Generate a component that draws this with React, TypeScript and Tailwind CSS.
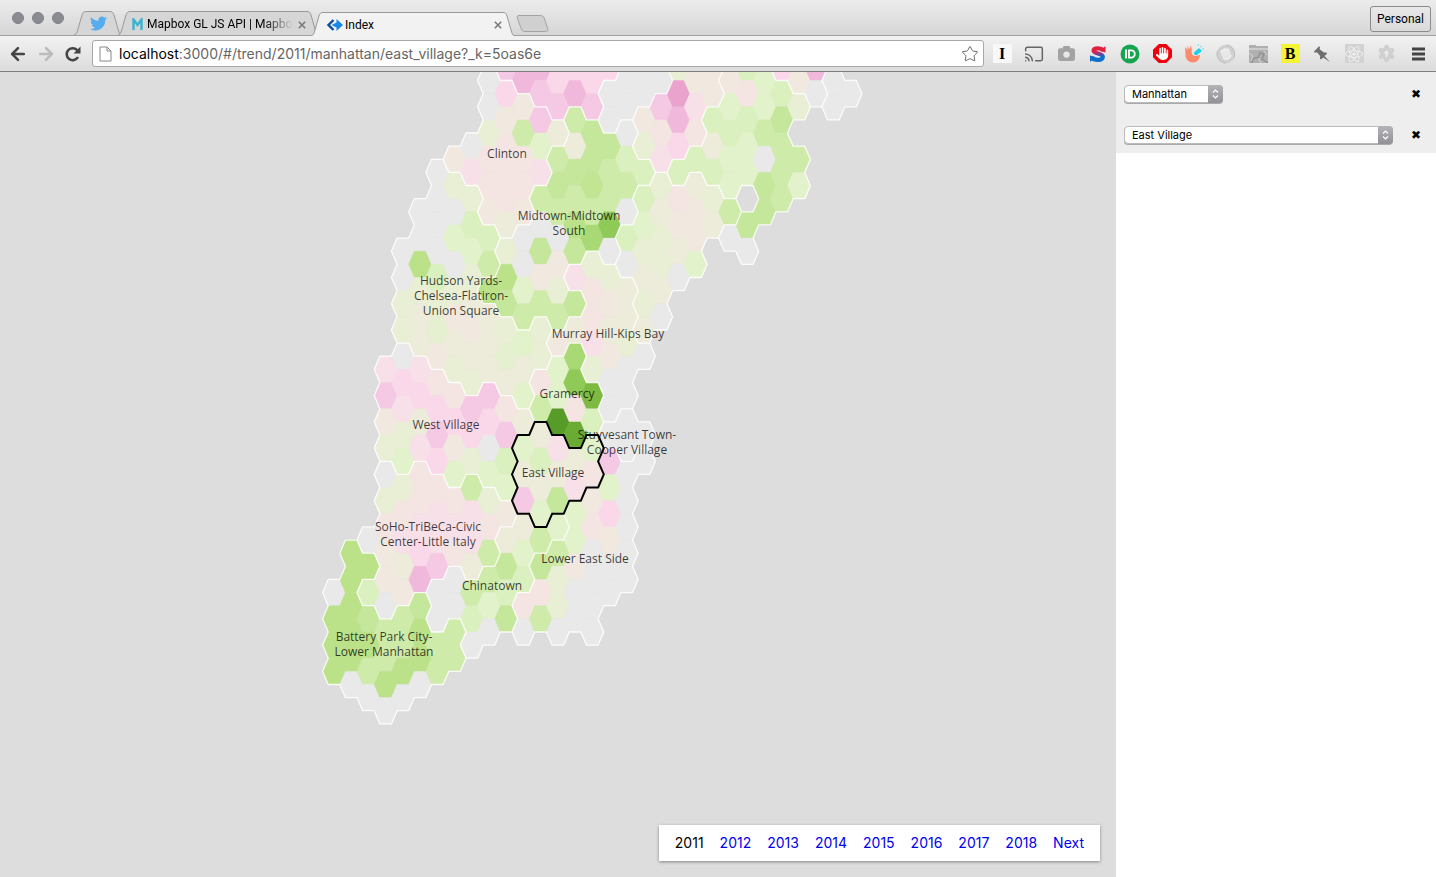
import React from "react";
import { ArrowLeft, ArrowRight, Cast, Star } from "lucide-react";
import { FaTwitter, FaCamera, FaHand, FaReact, FaGear } from "react-icons/fa6";

const FILLS: Record<string, string> = {
  g: "#e9e9e9",
  a: "#f1e9df",
  b: "#edebd9",
  c: "#e8efd4",
  w: "#e5f0d0",
  d: "#e2f2cb",
  e: "#dbf0bf",
  f: "#cfebaa",
  h: "#c5e79b",
  x: "#c1e592",
  i: "#bbe289",
  j: "#a9d975",
  k: "#8fc957",
  l: "#7dba41",
  m: "#6aab33",
  n: "#579b28",
  p: "#f4e5e3",
  q: "#f8e0e9",
  r: "#fad8ea",
  s: "#f5c9e3",
  t: "#f0b8da",
  u: "#e9a3cd",
};

// Each column: first half-row index, then one "region + fill" pair for every hexagon downwards.
const COLUMNS: [number, string][] = [
  [39, "Bg Bi Bi Bi"],
  [36, "Bi Bi Bi Bi Bi Bg"],
  [35, "Sg Bi Se Bh Bi Bf Bg"],
  [22, "Wq Ws Wa Wc Sg Sc Sp Sa Sa Sg Bf Bf Bi Bg"],
  [13, "Hg Hg Hc Hc Wg Wr Wq Wc Wd Sc Sp Sq Sb Sa Bf Bf Bi Bg"],
  [10, "Hg Hg Hi Hc Hb Hb Wq Wr Wb Wq Sp Sp Sq Sr St Bh Bi Bi Bg"],
  [7, "Hg Hg Hg Hg He Hc Hw Ha Wp Wr Ws Wr Sp Sq Sq Ss Ng Ng Bf Bf"],
  [6, "Ca Hc Hg Hd Hg Hc Ha Hb Hc Wp Wr Wa Wd Sp Sq Sp Ng Ng Bf Bf"],
  [5, "Cg Cq Hc He Hd Hc Hb Ha Hb Hc Ws Wr Wc Sf Sq Sq Sb Nf Ne Ng"],
  [0, "Cg Cg Cc Cp Cp Ca He Hf Mi Hb Hb Hb Ws Wr Wg Wd Sc Sp Sf Nf Nd Ng"],
  [-1, "Us Cr Ca Cp Cp Cp Cb Mc Mi Mh Hc Hw Hb Wp Ws We Wd Sa Nb Nh Ne Nh"],
  [0, "Ut Ca Cf Cp Cp Ca Mg Mg Md Mf Hd Hb Hd Wb Ed Eb Es Nb Nd Ne Lp Lg"],
  [-1, "Ut Us Cs Cd Cq Mf Mg Mh Ma Mf Hc Hc Gp Gf Eb Ee Eb Ed Nf Lh Lp Lf"],
  [0, "Ur Us Cb Mf Mh Mf Mg Ma Mc Mf Ka Gd Gd Gn Eq Eb Eh Nd Lf Lc Lc Lg"],
  [-1, "Ur Ut Mf Mb Mh Mf Mi Mh Kq Mh Kb Gj Gk Gp Gm Eb Eq Ld Ld La Lg Lg"],
  [0, "Ur Us Mh Mh Mx Mf Mj Kc Kp Kp Kq Kc Gl Ge Ed Ep La Lp Lg Lg Lg Lg"],
  [-1, "Ur Pg Pg Mh Mf Mf Mk Mg Kc Ka Kb Ka Kg Kg Yg Ls Ld Lr La Lg Lg"],
  [0, "Pg Pg Mg Me Mf Mg Te Tg Kb Kb Kc Kg Kg Yg Yg Lg Lg Lg Lg Lg"],
  [-1, "Pg Pg Va Vc Me Te Td Tc Tb Tc Tb Kg .. .. Yg Lg"],
  [0, "Pg Vs Vp Vq Tc Tb Tc Tc Tb Tg"],
  [-1, "Vc Vu Vt Vr Xe Tp Ta Tb Tg"],
  [0, "Va Vq Vp Xe Tb Ta Ta Td"],
  [-1, "Va Va Xe Xb Xe Tc Tb"],
  [0, "Xa Xd Xe Xd Xd Tf Xg"],
  [-1, "Xe Xp Xe Xd Xd .. Xh Xg"],
  [0, "Xd Xd Xf Xg Xh Xh"],
  [-1, "Zr Xe Xh Xf Xf Xf"],
  [0, "Za Xc .. Xf Xd"],
  [-1, "Zt Zg"],
  [0, "Rg Rg"],
  [1, "Rg"],
];

const COL_W = 17.22;
const HALF_H = 13.13;
const OUT = 11.45;
const IN = 5.8;

type Cell = { c: number; h: number; region: string; fill: string };

const cells: Cell[] = [];
COLUMNS.forEach(([start, row], c) => {
  row.split(" ").forEach((pair, i) => {
    if (pair !== "..") cells.push({ c, h: start + i * 2, region: pair[0], fill: FILLS[pair[1]] });
  });
});
const regionAt = new Map(cells.map((cell) => [`${cell.c},${cell.h}`, cell.region]));

const corners = (c: number, h: number): [number, number][] => {
  const x = 334 + c * COL_W;
  const y = 8.5 + h * HALF_H;
  return [
    [x - IN, y - HALF_H],
    [x + IN, y - HALF_H],
    [x + OUT, y],
    [x + IN, y + HALF_H],
    [x - IN, y + HALF_H],
    [x - OUT, y],
  ];
};

const NEIGHBOURS = [[0, -2], [1, -1], [1, 1], [0, 2], [-1, 1], [-1, -1]];

const fmt = ([x, y]: [number, number]) => `${x.toFixed(1)} ${y.toFixed(1)}`;

const outline = (list: Cell[]) =>
  list
    .map((cell) => {
      const p = corners(cell.c, cell.h);
      return NEIGHBOURS.map(([dc, dh], i) =>
        regionAt.get(`${cell.c + dc},${cell.h + dh}`) === cell.region
          ? ""
          : `M${fmt(p[i])}L${fmt(p[(i + 1) % 6])}`,
      ).join("");
    })
    .join("");

const borders = outline(cells);
const selected = outline(cells.filter((cell) => cell.region === "E"));

const LABELS: { x: number; y: number; lines: string[] }[] = [
  { x: 507, y: 86, lines: ["Clinton"] },
  { x: 569, y: 148, lines: ["Midtown-Midtown", "South"] },
  { x: 461, y: 213, lines: ["Hudson Yards-", "Chelsea-Flatiron-", "Union Square"] },
  { x: 608, y: 266, lines: ["Murray Hill-Kips Bay"] },
  { x: 567, y: 326, lines: ["Gramercy"] },
  { x: 446, y: 357, lines: ["West Village"] },
  { x: 627, y: 367, lines: ["Stuyvesant Town-", "Cooper Village"] },
  { x: 553, y: 405, lines: ["East Village"] },
  { x: 428, y: 459, lines: ["SoHo-TriBeCa-Civic", "Center-Little Italy"] },
  { x: 585, y: 491, lines: ["Lower East Side"] },
  { x: 492, y: 518, lines: ["Chinatown"] },
  { x: 384, y: 569, lines: ["Battery Park City-", "Lower Manhattan"] },
];

function HexMap() {
  return (
    <svg className="absolute inset-0 size-full" role="img" aria-label="Neighborhood trend map">
      <g>
        {cells.map((cell) => (
          <polygon
            key={`${cell.c},${cell.h}`}
            points={corners(cell.c, cell.h).map(fmt).join(" ")}
            fill={cell.fill}
            stroke={cell.fill}
            strokeWidth="0.4"
          />
        ))}
      </g>
      <path d={borders} stroke="#fff" strokeOpacity="0.85" strokeWidth="1.3" strokeLinecap="round" fill="none" />
      <path d={selected} stroke="#000" strokeWidth="2" strokeLinecap="round" fill="none" />
      <g className="font-['Open_Sans',sans-serif] text-[12px]" fill="#000" fillOpacity="0.75" textAnchor="middle">
        {LABELS.map((label) => (
          <text key={label.lines[0]} y={label.y}>
            {label.lines.map((line, i) => (
              <tspan key={line} x={label.x} dy={i === 0 ? 0 : 15}>
                {line}
              </tspan>
            ))}
          </text>
        ))}
      </g>
    </svg>
  );
}

function Tab({ active, className, children }: { active?: boolean; className: string; children: React.ReactNode }) {
  const fill = active ? "#f2f2f2" : "#d6d6d6";
  return (
    <div className={`flex h-6 items-stretch ${active ? "relative z-10" : ""} ${className}`}>
      <svg className="w-3 shrink-0" viewBox="0 0 12 24" aria-hidden="true">
        <path d="M0 24 C3 23 3 21 4 18 L8 4 C9 1 10 .5 12 .5 V24Z" fill={fill} />
        <path d="M0 24 C3 23 3 21 4 18 L8 4 C9 1 10 .5 12 .5" fill="none" stroke="#999" />
      </svg>
      <div
        className={`flex min-w-0 flex-1 items-center border-t border-[#999] ${active ? "bg-[#f2f2f2]" : "bg-[#d6d6d6]"}`}
      >
        {children}
      </div>
      <svg className="w-3 shrink-0" viewBox="0 0 12 24" aria-hidden="true">
        <path d="M12 24 C9 23 9 21 8 18 L4 4 C3 1 2 .5 0 .5 V24Z" fill={fill} />
        <path d="M12 24 C9 23 9 21 8 18 L4 4 C3 1 2 .5 0 .5" fill="none" stroke="#999" />
      </svg>
    </div>
  );
}

function TabClose() {
  return (
    <button aria-label="Close tab" className="shrink-0 p-px">
      <svg width="8" height="8" viewBox="0 0 8 8" aria-hidden="true">
        <path d="M.8.8l6.4 6.4M7.2.8L.8 7.2" stroke="#777" strokeWidth="1.5" />
      </svg>
    </button>
  );
}

const EXTENSIONS: { name: string; icon: React.ReactNode }[] = [
  {
    name: "Instapaper",
    icon: (
      <span className="flex size-[19px] items-center justify-center bg-[#f8f8f8] font-['Liberation_Serif',serif] text-base font-bold text-black">
        I
      </span>
    ),
  },
  { name: "Cast", icon: <Cast size={20} strokeWidth={1.8} color="#666" /> },
  { name: "Screenshot", icon: <FaCamera size={17} color="#a3a3a3" /> },
  {
    name: "Stylish",
    icon: (
      <svg width="18" height="18" viewBox="0 0 18 18">
        <defs>
          <linearGradient id="s-top" x1=".3" y1="0" x2=".5" y2="1">
            <stop offset=".25" stopColor="#e0213f" />
            <stop offset=".55" stopColor="#7c3b95" />
            <stop offset=".75" stopColor="#0c6fc9" />
          </linearGradient>
        </defs>
        <path
          d="M14.500 5.200C12.500 3 5 2.200 4.500 5.500 4.200 9 14 8 13.800 12 13.500 16 5 15.500 2.500 12.800"
          fill="none"
          stroke="url(#s-top)"
          strokeWidth="4.200"
        />
        <path d="M16.500 1v6.500L11 6z" fill="#e0213f" />
        <path d="M1 17v-6.500L6.500 12z" fill="#0c6fc9" />
      </svg>
    ),
  },
  {
    name: "Pushbullet",
    icon: (
      <svg width="20" height="20" viewBox="0 0 20 20">
        <circle cx="10" cy="10" r="9.500" fill="#16a54f" />
        <path d="M6 5.500v9" stroke="#fff" strokeWidth="2" />
        <path d="M9 6.400h2.200a3.600 3.600 0 010 7.200H9z" fill="none" stroke="#fff" strokeWidth="1.800" />
      </svg>
    ),
  },
  {
    name: "AdBlock",
    icon: (
      <span className="relative flex size-[19px] items-center justify-center">
        <svg className="absolute inset-0 size-full" viewBox="0 0 18 18">
          <path d="M5.500 0h7L18 5.500v7L12.500 18h-7L0 12.500v-7z" fill="#f0000c" />
        </svg>
        <FaHand size={13} color="#fff" className="relative" />
      </span>
    ),
  },
  {
    name: "Color picker",
    icon: (
      <svg width="20" height="20" viewBox="0 0 20 20">
        <path
          d="M1 3l2.500 3L3.500 1.500l2 4L7 1l.8 5C7 8 8 11.500 11 12l5-1c0 4-3 7.500-7 7.500S1 15 1.500 10z"
          fill="#fb8b6b"
        />
        <path d="M10 8.500L15 4l3 3-5 4c-2 .5-3.500-.8-3-2.500z" fill="#1fd0e8" />
        <path d="M16 3l2-1M18 5h2M14 2l.5-2" stroke="#6ddff0" strokeWidth="1" />
      </svg>
    ),
  },
  {
    name: "Swirl",
    icon: (
      <svg width="20" height="20" viewBox="0 0 20 20" fill="none">
        <circle cx="10" cy="10" r="7" stroke="#d0d0d0" strokeWidth="4.500" />
        <path d="M10 1a9 9 0 018 12.500M10 19A9 9 0 011.500 7" stroke="#bdbdbd" />
        <path d="M5 9a5 5 0 018.500-2.500M15 11a5 5 0 01-8 3" stroke="#f2f2f2" strokeWidth="1.500" />
      </svg>
    ),
  },
  {
    name: "Page gallery",
    icon: (
      <svg width="19" height="18" viewBox="0 0 19 18">
        <path d="M0 0h7v1h12v17H0z" fill="#b0b0b0" />
        <path d="M0 3h19v2H0z" fill="#cdcdcd" />
        <path d="M3 18c0-5 3-6 6-5l2-5 4 1-2 5 6 4" stroke="#929292" fill="none" strokeWidth="1.500" />
        <path d="M0 8l4 3-2 5M9 13l3 5M15 6l3 4" stroke="#d6d6d6" fill="none" />
      </svg>
    ),
  },
  {
    name: "Bookmark",
    icon: (
      <span className="flex size-[19px] items-center justify-center bg-[#f5f335] font-['Liberation_Serif',serif] text-base font-bold text-black">
        B
      </span>
    ),
  },
  {
    name: "Pin",
    icon: (
      <svg width="18" height="18" viewBox="0 0 18 18">
        <path
          d="M6 1.200l1 1-.4 2L11 7.600l2.200-.2 1 1-2.700 2.700L17 17l-6.800-4.600-2.300 2.200-1-1 .3-2.600L4 7.200l-2 .5-1.100-1z"
          fill="#6e6e6e"
        />
      </svg>
    ),
  },
  {
    name: "React Developer Tools",
    icon: (
      <span className="flex size-[19px] items-center justify-center bg-[#d2d2d2]">
        <FaReact size={18} color="#f4f4f4" />
      </span>
    ),
  },
  {
    name: "Settings",
    icon: (
      <span className="relative flex items-center justify-center">
        <FaGear size={17} color="#d0d0d0" />
        <svg className="absolute" width="9" height="9" viewBox="0 0 9 9">
          <circle cx="4.500" cy="4.500" r="4.300" fill="#d0d0d0" />
          <path d="M4.500 1L7.500 4.500H5.500V8h-2V4.500h-2z" fill="#ececec" />
        </svg>
      </span>
    ),
  },
  {
    name: "Menu",
    icon: (
      <svg width="13" height="14" viewBox="0 0 13 14">
        <path d="M0 2h13M0 7h13M0 12h13" stroke="#444" strokeWidth="3" />
      </svg>
    ),
  },
];

function BrowserChrome() {
  return (
    <header className="shrink-0 border-b border-[#7f7f7f] font-[Roboto,sans-serif]">
      <div className="flex h-9 items-end border-b border-[#a0a0a0] bg-linear-to-b from-[#ececec] to-[#d6d6d6]">
        <div className="flex gap-2 self-center pl-3">
          <span className="size-3 rounded-full border border-[#80808a] bg-[#8b8b92]" />
          <span className="size-3 rounded-full border border-[#80808a] bg-[#8b8b92]" />
          <span className="size-3 rounded-full border border-[#80808a] bg-[#8b8b92]" />
        </div>
        <Tab className="ml-2.5 w-12">
          <FaTwitter size={17} color="#55acee" className="mx-auto shrink-0" />
        </Tab>
        <Tab className="-ml-1 w-[201px]">
          <svg width="11" height="12" viewBox="0 0 11 12" className="mr-1 ml-0.5 shrink-0" aria-hidden="true">
            <path d="M1.500 12V1.500L5.500 7l4-5.500V12" fill="none" stroke="#3bb2d0" strokeWidth="2.400" />
          </svg>
          <span className="min-w-0 flex-1 overflow-hidden bg-linear-to-r from-black from-80% to-transparent bg-clip-text text-[12px] whitespace-nowrap text-transparent">
            Mapbox GL JS API | Mapbox
          </span>
          <span className="ml-1">
            <TabClose />
          </span>
        </Tab>
        <Tab active className="-ml-2 -mb-px w-[204px]">
          <svg width="16" height="12" viewBox="0 0 16 12" className="mr-0.5 ml-1 shrink-0" aria-hidden="true">
            <path d="M6.500 1L1.500 6l5 5" fill="none" stroke="#0d4f9e" strokeWidth="2.400" />
            <path d="M9.500 0l6.500 6-6.500 6v-3.500L4.500 6l5-2.500z" fill="#1787e8" />
          </svg>
          <span className="flex-1 text-[12px] text-black">Index</span>
          <TabClose />
        </Tab>
        <button aria-label="New tab" className="mb-[3px] ml-px">
          <svg width="33" height="17" viewBox="0 0 33 17" aria-hidden="true">
            <path
              d="M3 .5h21.500c2 0 3 .8 3.700 2.500l3.500 10.500c.6 2-.2 3-2.200 3H9c-2 0-3-.8-3.700-2.500L1.300 3C.8 1.500 1.300.5 3 .5z"
              fill="#d0d0d0"
              stroke="#a3a3a3"
            />
          </svg>
        </button>
        <button className="mr-[5px] mb-[3px] ml-auto h-[26px] rounded-[3px] border border-[#8c8c8c] bg-linear-to-b from-[#e9e9e9] to-[#dadada] px-1.5 text-[12px] text-black">
          Personal
        </button>
      </div>
      <div className="flex h-[35px] items-center bg-linear-to-b from-[#f2f2f2] to-[#dcdcdc]">
        <nav className="flex items-center gap-2 pl-2 pr-2.5" aria-label="History">
          <button aria-label="Back">
            <ArrowLeft size={20} strokeWidth={3} color="#444" />
          </button>
          <button aria-label="Forward">
            <ArrowRight size={20} strokeWidth={3} color="#bbb" />
          </button>
          <button aria-label="Reload">
            <svg width="18" height="18" viewBox="0 0 18 18" aria-hidden="true">
              <path d="M14 12a6 6 0 11-.5-6.500" fill="none" stroke="#444" strokeWidth="2.500" />
              <path d="M16.500 1.500v7h-7z" fill="#444" />
            </svg>
          </button>
        </nav>
        <div className="flex h-[27px] min-w-0 flex-1 items-center rounded-[3px] border border-[#a8a8a8] bg-white pr-1 pl-1.5">
          <svg width="13" height="16" viewBox="0 0 13 16" className="shrink-0" aria-hidden="true">
            <path d="M1 1h7l4 4v10H1zM8 1v4h4" fill="#fff" stroke="#888" />
          </svg>
          <a
            href="#/trend/2011/manhattan/east_village"
            className="min-w-0 flex-1 truncate pl-[7px] font-[Inter,sans-serif] text-[14px] text-[#666]"
          >
            <span className="text-black">localhost</span>:3000/#/trend/2011/manhattan/east_village?_k=5oas6e
          </a>
          <button aria-label="Bookmark this page">
            <Star size={18} strokeWidth={1.3} color="#666" />
          </button>
        </div>
        <div className="flex gap-3 pr-2 pl-2">
          {EXTENSIONS.map((ext) => (
            <button key={ext.name} aria-label={ext.name} className="flex size-5 items-center justify-center">
              {ext.icon}
            </button>
          ))}
        </div>
      </div>
    </header>
  );
}

function Picker({ label, value, wide }: { label: string; value: string; wide?: boolean }) {
  return (
    <div className="flex h-[18px] items-center justify-between">
      <div className={`relative ${wide ? "w-[269px]" : "w-[99px]"}`}>
        <select
          aria-label={label}
          defaultValue={value}
          className="block h-[18px] w-full appearance-none rounded-[4px] border border-[#bbb] bg-white pr-4 pl-[7px] text-[11px] leading-4 text-black shadow-[0_1px_0_#aaa]"
        >
          <option>{value}</option>
        </select>
        <span className="pointer-events-none absolute inset-y-0 right-0 flex w-[15px] items-center justify-center rounded-r-[4px] bg-linear-to-b from-[#b3b3b8] to-[#919196]">
          <svg width="7" height="10" viewBox="0 0 7 10" aria-hidden="true">
            <path d="M1 3.500L3.500 1 6 3.500M1 6.500L3.500 9 6 6.500" fill="none" stroke="#fff" strokeWidth="1.200" />
          </svg>
        </span>
      </div>
      <button
        aria-label={`Clear ${label}`}
        className="flex size-4 items-center justify-center font-['DejaVu_Sans',sans-serif] text-[12px] font-bold text-black"
      >
        ✖
      </button>
    </div>
  );
}

const YEARS = ["2011", "2012", "2013", "2014", "2015", "2016", "2017", "2018"];

export default function App() {
  return (
    <div className="flex h-screen flex-col overflow-hidden bg-white">
      <BrowserChrome />
      <div className="flex min-h-0 flex-1 font-[Inter,sans-serif]">
        <main className="relative min-w-0 flex-1 overflow-hidden bg-[#ddd]">
          <HexMap />
          <nav
            aria-label="Year"
            className="absolute right-4 bottom-4 flex h-9 items-center gap-4 bg-white px-4 pb-0.5 text-[14px] text-[#0000ee] shadow-[0_1px_3px_rgba(0,0,0,0.4)]"
          >
            {YEARS.map((year, i) =>
              i === 0 ? (
                <span key={year} className="text-black" aria-current="page">
                  {year}
                </span>
              ) : (
                <a key={year} href={`#/trend/${year}/manhattan/east_village`}>
                  {year}
                </a>
              ),
            )}
            <a href="#/trend/2012/manhattan/east_village">Next</a>
          </nav>
        </main>
        <aside className="w-80 shrink-0 bg-white">
          <div className="flex flex-col gap-[23px] bg-[#eee] pt-[13px] pr-3 pb-[9px] pl-2">
            <Picker label="Borough" value="Manhattan" />
            <Picker label="Neighborhood" value="East Village" wide />
          </div>
        </aside>
      </div>
    </div>
  );
}
